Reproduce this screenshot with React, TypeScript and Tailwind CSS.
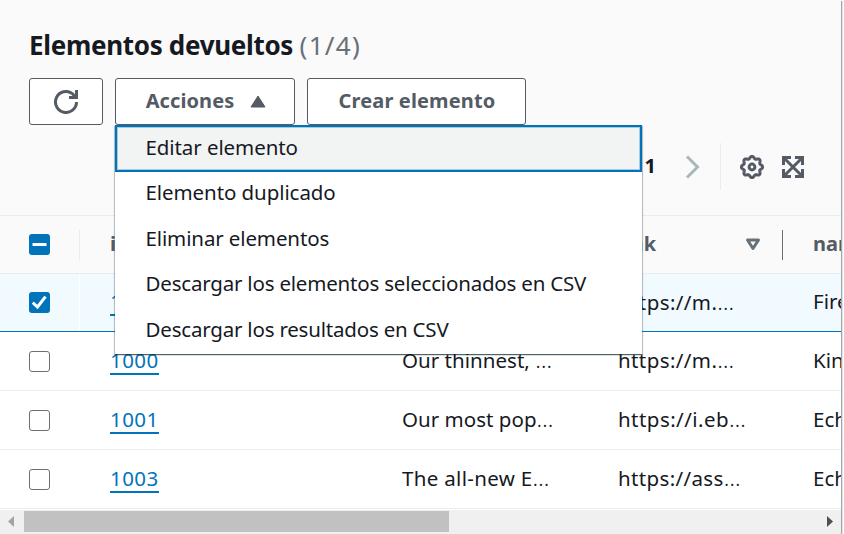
import type { ReactNode } from "react";

type Row = {
  id: string;
  description: string;
  descriptionTracking: string;
  link: string;
  linkTracking: string;
  name: string;
  selected?: boolean;
};

const rows: Row[] = [
  { id: "1002", description: "", descriptionTracking: "", link: "https://m.", linkTracking: "tracking-[0.4px]", name: "Fire", selected: true },
  { id: "1000", description: "Our thinnest, ", descriptionTracking: "tracking-[0.03px]", link: "https://m.", linkTracking: "tracking-[0.4px]", name: "Kindle" },
  { id: "1001", description: "Our most pop", descriptionTracking: "tracking-[0.03px]", link: "https://i.eb", linkTracking: "tracking-[0.45px]", name: "Echo" },
  { id: "1003", description: "The all-new E", descriptionTracking: "tracking-[0.33px]", link: "https://ass", linkTracking: "tracking-[0.35px]", name: "Echo" },
];

const actions = [
  { label: "Editar elemento", tracking: "tracking-[-0.08px]" },
  { label: "Elemento duplicado", tracking: "tracking-[-0.08px]" },
  { label: "Eliminar elementos", tracking: "tracking-[-0.12px]" },
  { label: "Descargar los elementos seleccionados en CSV", tracking: "tracking-[-0.2px]" },
  { label: "Descargar los resultados en CSV", tracking: "tracking-[-0.2px]" },
];

function RefreshIcon() {
  return (
    <svg width="24" height="24" viewBox="0 0 24 24" fill="none" stroke="#545b64" strokeWidth="3">
      <path d="M22.500 12A10.500 10.500 0 1 1 18.300 3.600L21 6.500" />
      <path d="M22.500 0v7.500H15" />
    </svg>
  );
}

function GearIcon() {
  const points = Array.from({ length: 96 }, (_, i) => {
    const angle = (i / 96) * Math.PI * 2;
    const radius = 9.6 + 1.1 * Math.cos(angle * 8);
    return `${(12 + radius * Math.cos(angle)).toFixed(2)},${(12 + radius * Math.sin(angle)).toFixed(2)}`;
  }).join(" ");
  return (
    <svg width="24" height="24" viewBox="0 0 24 24" fill="none" stroke="#545b64" strokeWidth="3">
      <polygon points={points} strokeLinejoin="round" />
      <circle cx="12" cy="12" r="2.900" />
    </svg>
  );
}

function ExpandIcon() {
  return (
    <svg width="22" height="22" viewBox="0 0 22 22" fill="none" stroke="#545b64" strokeWidth="3">
      <path d="M1.500 9v-7.500h7.500M13 1.500h7.500v7.500M20.500 13v7.500h-7.500M9 20.500h-7.500v-7.500" />
      <path d="M2 2l18 18M20 2L2 20" strokeWidth="3" />
    </svg>
  );
}

function Checkbox({ state }: { state: "off" | "on" | "mixed" }) {
  if (state === "off") {
    return <div className="h-[21px] w-[21px] rounded-[3px] border-[1.5px] border-[#687078] bg-white" />;
  }
  return (
    <div className="flex h-[21px] w-[21px] items-center justify-center rounded-[3px] bg-[#0073bb]">
      <svg width="21" height="21" viewBox="0 0 21 21" fill="none" stroke="#fff" strokeWidth="3">
        {state === "on" ? <path d="M3.800 10.700l4.700 4.300 8-10.300" /> : <path d="M3.500 10.500h14" />}
      </svg>
    </div>
  );
}

function Truncated({ text, tracking }: { text: string; tracking: string }) {
  return (
    <span className={`flex items-baseline pb-[2px] leading-[28px] whitespace-pre ${tracking}`}>
      {text}
      {text && <span className="text-[23px] leading-[20px] font-light tracking-[0px]">…</span>}
    </span>
  );
}

function Button({ className, children }: { className: string; children: ReactNode }) {
  return (
    <button
      className={`flex h-[47px] items-center justify-center rounded-[3px] border border-[#545b64] bg-white text-[20px] leading-[28px] font-bold text-[#545b64] ${className}`}
    >
      {children}
    </button>
  );
}

export default function App() {
  return (
    <div className="flex h-[534px] w-[844px] overflow-hidden bg-white font-['Noto_Sans','Open_Sans',sans-serif] text-[20.5px] text-[#16191f]">
      <main className="flex w-[841px] shrink-0 flex-col overflow-hidden">
        <header className="h-[216px] shrink-0 border-b border-[#eaeded] bg-[#fafafa] pt-[26px] pl-[29px]">
          <h1 className="h-[38px] text-[26px] leading-[38px] font-bold tracking-[-0.31px] whitespace-nowrap">
            Elementos devueltos <span className="font-normal tracking-[1.3px] text-[#687078]">(1/4)</span>
          </h1>
          <div className="mt-[14px] flex gap-3">
            <Button className="w-[74px]">
              <RefreshIcon />
            </Button>
            <div className="relative">
              <Button className="w-[180px] gap-[16px] pl-[2px] tracking-[0.1px]">
                <span className="pb-[2px]">Acciones</span>
                <svg width="16" height="13" viewBox="0 0 16 13" fill="#545b64" stroke="#545b64" strokeLinejoin="round">
                  <path d="M8 1L15 12H1z" />
                </svg>
              </Button>
              <ul className="absolute top-[47px] left-0 z-10 h-[229px] w-[527px] bg-white shadow-[0_1px_1px_0_rgba(0,28,36,0.5),1px_1px_1px_0_rgba(0,28,36,0.2),-1px_1px_1px_0_rgba(0,28,36,0.2)]">
                {actions.map(({ label, tracking }, index) => (
                  <li
                    key={label}
                    className={`flex items-center whitespace-nowrap ${tracking} ${
                      index === 0
                        ? "h-[47px] border-[2px] border-[#0073bb] bg-[#f2f3f3] pl-[28.5px] shadow-[inset_0_0_0_1px_#a5cbe2]"
                        : "h-[45.5px] pl-[30.5px]"
                    }`}
                  >
                    <span className={`leading-[28px] ${index % 2 === 1 ? "pb-[5px]" : "pb-[4px]"}`}>{label}</span>
                  </li>
                ))}
              </ul>
            </div>
            <Button className="w-[219px] pl-px tracking-[0.14px]">
              <span className="pb-[2px]">Crear elemento</span>
            </Button>
          </div>
          <div className="mt-[18px] flex h-[47px] items-center justify-end pr-[37px]">
            <span className="pb-px text-[20px] font-bold">1</span>
            <svg className="ml-[29px]" width="15" height="24" viewBox="0 0 15 24" fill="none" stroke="#aab7b8" strokeWidth="3">
              <path d="M2 1.500l10.500 10.500L2 22.500" />
            </svg>
            <div className="ml-[20px] h-full w-px bg-[#eaeded]" />
            <div className="ml-[19px]">
              <GearIcon />
            </div>
            <div className="ml-[18px]">
              <ExpandIcon />
            </div>
          </div>
        </header>

        <div className="flex h-[58px] w-[1000px] shrink-0 items-center border-b border-[#eaeded] bg-[#fafafa] text-[20px] font-bold text-[#545b64]">
          <div className="w-[79px] pl-[29px]">
            <Checkbox state="mixed" />
          </div>
          <div className="h-[30px] w-px bg-[#eaeded]" />
          <div className="w-[538px] pb-[2px] pl-[30px]">id</div>
          <div className="w-[127px] pb-[2px] tracking-[0.3px]">link</div>
          <svg width="16" height="13" viewBox="0 0 16 13" fill="none" stroke="#687078" strokeWidth="3" strokeLinejoin="round">
            <path d="M2.500 2h11L8 10.500z" />
          </svg>
          <div className="ml-[21px] h-[30px] w-px bg-[#687078]" />
          <div className="pb-[2px] pl-[30px]">name</div>
        </div>

        {rows.map((row) => (
          <div
            key={row.id}
            className={`flex w-[1000px] shrink-0 items-center whitespace-nowrap ${
              row.selected ? "h-[58px] border-b border-[#0073bb] bg-[#f1faff]" : "h-[59px] border-b border-[#eaeded] bg-white"
            }`}
          >
            <div className="w-[79px] pl-[29px]">
              <Checkbox state={row.selected ? "on" : "off"} />
            </div>
            <div className={`h-full w-px ${row.selected ? "bg-white" : ""}`} />
            <div className="w-[322px] pb-[2px] pl-[30px]">
              <a className="inline-block h-[28px] border-b-2 border-[#0073bb] leading-[26px] tracking-[0.45px] text-[#0073bb]">{row.id}</a>
            </div>
            <div className="w-[216px]">
              <Truncated text={row.description} tracking={row.descriptionTracking} />
            </div>
            <div className="w-[195px]">
              <Truncated text={row.link} tracking={row.linkTracking} />
            </div>
            <div className="pb-[2px]">{row.name}</div>
          </div>
        ))}

        <div className="mt-px flex h-[24px] shrink-0 items-start bg-[#f0f0f0] pt-px">
          <svg className="mt-[5px] ml-[8px]" width="6" height="11" viewBox="0 0 6 11" fill="#a3a3a3">
            <path d="M6 0v11L0 5.500z" />
          </svg>
          <div className="ml-[10px] h-[21px] w-[425px] bg-[#c1c1c1]" />
          <svg className="mt-[5px] mr-[8px] ml-auto" width="6" height="11" viewBox="0 0 6 11" fill="#505050">
            <path d="M0 0v11L6 5.500z" />
          </svg>
        </div>
      </main>
      <div className="mt-px w-px bg-[#a0a8ab]" />
      <div className="mt-px w-px bg-[#dfe4e4]" />
    </div>
  );
}
